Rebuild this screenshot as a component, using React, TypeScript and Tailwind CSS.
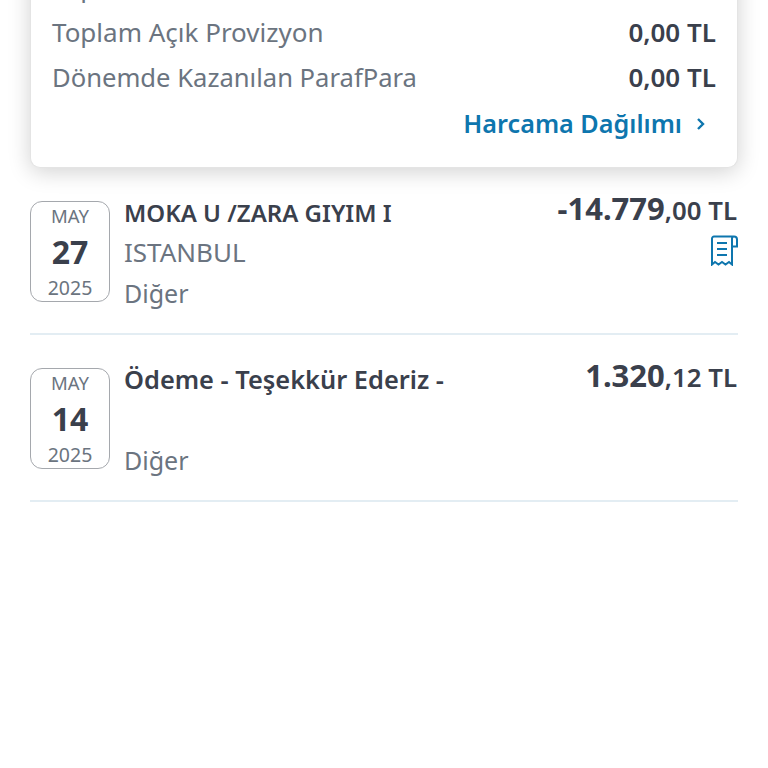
function SummaryRow({ label, value, labelClass }: { label: string; value: string; labelClass: string }) {
  return (
    <div className="flex h-[45px] items-center justify-between">
      <span className={`${labelClass} text-[#6b7480]`}>{label}</span>
      <span className="text-[26px] font-semibold text-[#3a404c]">{value}</span>
    </div>
  );
}

function DateBox({ month, day, year }: { month: string; day: string; year: string }) {
  return (
    <div className="flex h-[101px] w-[80px] shrink-0 flex-col items-center rounded-[12px] border border-[#a5a8ad] pt-[1px] text-[#6b7480]">
      <span className="text-[18.5px] leading-[26px]">{month}</span>
      <span className="text-[32px] font-bold leading-[46px] text-[#3a404c]">{day}</span>
      <span className="text-[19.5px] leading-[26px]">{year}</span>
    </div>
  );
}

function Receipt() {
  return (
    <svg width="28" height="31" viewBox="0 0 28 31" fill="none" stroke="#0e76ae" strokeWidth="2">
      <path d="M22 3.5A2 2 0 0 1 24 1.5H4A2 2 0 0 0 2 3.5V29.5l3-2.5 3.5 2.5 3.5-2.5 3.5 2.5 3.5-2.5 3 2.5V3.5Z" />
      <path d="M24 1.5A3 3 0 0 1 27 4.5V11.5H22" />
      <path d="M7 8h10M7 14h10M7 20h10" />
    </svg>
  );
}

function Transaction({ month, day, year, title, titleClass, city, amount, cents, receipt }: { month: string; day: string; year: string; title: string; titleClass: string; city: string; amount: string; cents: string; receipt?: boolean }) {
  return (
    <div className="flex h-[167px] border-b-2 border-[#e3edf3] pt-[33px]">
      <DateBox month={month} day={day} year={year} />
      <div className="ml-[14px] flex flex-1 flex-col">
        <span className={`h-[33px] ${titleClass} font-semibold text-[#3a404c]`}>{title}</span>
        <span className="h-[41px] text-[26px] leading-[36px] text-[#6b7480]">{city}</span>
        <span className="text-[25px] leading-[36px] text-[#6b7480]">Diğer</span>
      </div>
      <div className="flex flex-col items-end pr-[1px]">
        <div className="-mt-[3px] flex h-[20px] items-baseline leading-[20px] text-[#3a404c]">
          <span className="text-[31px] font-bold">{amount}</span>
          <span className="text-[25.8px] font-semibold">{cents} TL</span>
        </div>
        {receipt && <div className="-mr-[1px] mt-[17px]"><Receipt /></div>}
      </div>
    </div>
  );
}

export default function App() {
  return (
    <div className="h-[768px] w-[768px] overflow-hidden bg-white font-['Noto_Sans',sans-serif]">
      <div className="relative mx-[30px] -mt-[58px] h-[226px] rounded-b-[10px] border border-t-0 border-[#e4e4e4] bg-white px-[21px] pt-[23px] shadow-[0_4px_22px_rgba(0,0,0,0.18)]">
        <SummaryRow label="Toplam Harcama" value="1.320,12" labelClass="text-[26px]" />
        <SummaryRow label="Toplam Açık Provizyon" value="0,00 TL" labelClass="text-[26px]" />
        <SummaryRow label="Dönemde Kazanılan ParafPara" value="0,00 TL" labelClass="pt-[2px] text-[25.6px]" />
        <div className="mt-[5px] flex items-center justify-end gap-[14px] pr-[10px] text-[#0e76ae]">
          <span className="text-[25.2px] font-semibold">Harcama Dağılımı</span>
          <svg width="10" height="14" viewBox="0 0 10 14" fill="none" stroke="currentColor" strokeWidth="2.4"><path d="M2 2l5 5-5 5" /></svg>
        </div>
      </div>
      <div className="mx-[30px]">
        <Transaction month="MAY" day="27" year="2025" title="MOKA U /ZARA GIYIM I" titleClass="text-[24px] leading-[24px]" city="ISTANBUL" amount="-14.779" cents=",00" receipt />
        <Transaction month="MAY" day="14" year="2025" title="Ödeme - Teşekkür Ederiz -" titleClass="text-[25.4px] leading-[22px]" city="" amount="1.320" cents=",12" />
      </div>
    </div>
  );
}
